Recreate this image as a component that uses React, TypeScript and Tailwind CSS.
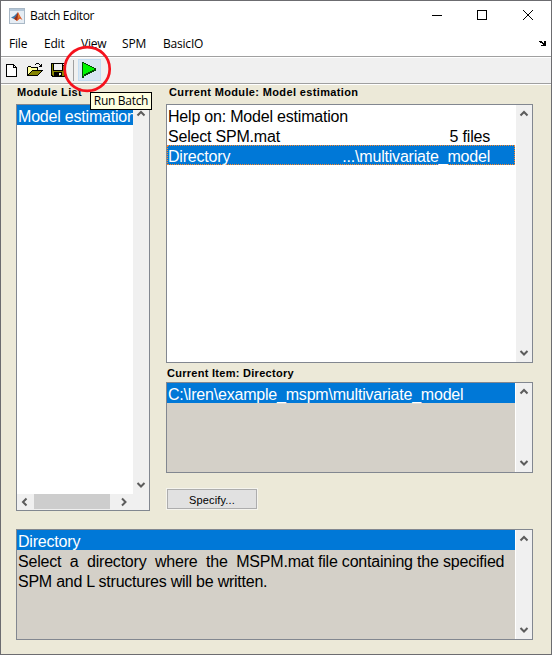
import type { ReactNode } from 'react';

const Chevron = ({ dir }: { dir: 'up' | 'down' | 'left' | 'right' }) => {
  const paths = {
    up: 'M0.5 5.5 L4 2 L7.5 5.5',
    down: 'M0.5 2 L4 5.5 L7.5 2',
    left: 'M5.5 0.5 L2 4 L5.5 7.5',
    right: 'M2 0.5 L5.5 4 L2 7.5',
  };
  return (
    <svg width="8" height="8" viewBox="0 0 8 8" className="block shrink-0 overflow-visible">
      <path d={paths[dir]} fill="none" stroke="#5c5c5c" strokeWidth="2" />
    </svg>
  );
};

const VScroll = () => (
  <div className="flex w-4 shrink-0 flex-col items-center justify-between bg-[#f0f0f0] pt-[5px] pb-[5px]">
    <Chevron dir="up" />
    <Chevron dir="down" />
  </div>
);

const Box = ({ className, children }: { className: string; children: ReactNode }) => (
  <div className={'flex border border-[#828790] text-[16px] leading-[20px] tracking-[-0.2px] ' + className}>{children}</div>
);

const MatlabLogo = () => (
  <svg width="16" height="16" viewBox="0 0 16 16" className="block">
    <rect x="0.5" y="0.5" width="15" height="15" fill="#e6edf4" stroke="#a9b8c6" />
    <rect x="1" y="1" width="14" height="2" fill="#b3c6d8" />
    <path d="M2 9.5 L5 8 L8.5 4.5 L7.5 9 L5 11 Z" fill="#3c78ad" />
    <path d="M5 10.8 L7 8.5 L9 4 L11 8 L13.5 12 L11 10.5 L8 13 Z" fill="#d9531e" />
    <path d="M5 10.8 L7 8.5 L9 4 L8.6 9 L7.6 12.6 Z" fill="#8a3020" />
    <path d="M9.3 5.5 L10.6 9 L9.6 10.5 Z" fill="#f5a13a" />
  </svg>
);

const NewIcon = () => (
  <svg width="11" height="13" viewBox="0 0 11 13" className="block" shapeRendering="crispEdges">
    <path d="M0 0H8V1H9V2H10V3H11V13H0Z" fill="#000" />
    <path d="M1 1H7V4H10V12H1Z" fill="#fff" />
    <path d="M8 2H9V3H8Z" fill="#fff" />
  </svg>
);

const OpenIcon = () => (
  <svg width="16" height="14" viewBox="0 0 16 14" className="block" shapeRendering="crispEdges">
    <path d="M9 0H12V1H9ZM8 1H9V2H8ZM12 1H13V2H12ZM14 1H15V4H12V3H13V2H14Z" fill="#000" />
    <path d="M1 3H4V4H11V7H16V8H15V9H14V10H13V11H12V12H11V13H0V4H1Z" fill="#000" />
    <path d="M1 4H4V5H10V7H5V8H4V9H3V10H2V11H1Z" fill="#ffff9c" />
    <path d="M5 8H14V9H13V10H12V11H11V12H2V11H3V10H4V9H5Z" fill="#848400" />
  </svg>
);

const SaveIcon = () => (
  <svg width="14" height="14" viewBox="0 0 14 14" className="block" shapeRendering="crispEdges">
    <path d="M0 0H14V14H1V13H0Z" fill="#000" />
    <path d="M1 1H2V8H12V3H13V13H2V12H1Z" fill="#848400" />
    <path d="M3 1H11V7H3Z" fill="#efefef" />
    <path d="M12 1H13V2H12ZM9 10H11V13H9Z" fill="#efefef" />
    <path d="M3 9H11V13H9V10H8V13H3Z" fill="#000" />
    <path d="M8 10H10V12H8Z" fill="#efefef" />
  </svg>
);

const RunIcon = () => (
  <svg width="15" height="16" viewBox="0 0 15 16" className="block" shapeRendering="crispEdges">
    <path d="M0 0H2V1H4V2H6V3H8V4H10V5H12V6H14V9H12V10H10V11H8V12H6V13H4V14H2V16H0Z" fill="#064b06" />
    <path d="M1 1H2V2H4V3H6V4H8V5H10V6H12V8H10V9H8V10H6V11H4V12H2V14H1Z" fill="#00f500" />
  </svg>
);

const DockArrow = () => (
  <svg width="7" height="6" viewBox="0 0 7 6" className="block" shapeRendering="crispEdges">
    <path d="M1 0H3V1H4V2H5V0H7V5H2V4H4V3H3V2H1V1H0V0Z" fill="#000" />
  </svg>
);

const ui = "font-['Open_Sans','Noto_Sans',sans-serif] text-[12px]";

export default function App() {
  return (
    <div className="relative flex h-[655px] w-[552px] flex-col overflow-hidden border border-[#6c6c70] bg-[#ece9d8] font-['Liberation_Sans',Arial,sans-serif] text-black">
      <header className={'flex h-[30px] shrink-0 items-center bg-white pl-2 ' + ui}>
        <span className="pb-px"><MatlabLogo /></span>
        <span className="ml-[5px] flex-1 tracking-[-0.35px]">Batch Editor</span>
        <svg width="104" height="14" viewBox="0 0 104 14" className="mr-[15px]" shapeRendering="crispEdges">
          <path d="M0 6.5H10" stroke="#000" />
          <rect x="45.5" y="1.5" width="9" height="9" fill="none" stroke="#000" />
          <path d="M91 1L101 11M101 1L91 11" stroke="#000" shapeRendering="auto" />
        </svg>
      </header>

      <nav className={'flex h-[25px] shrink-0 items-center bg-white pl-2 tracking-[-0.2px] ' + ui}>
        <span className="w-[35px]">File</span>
        <span className="w-[37px]">Edit</span>
        <span className="w-[41px]">View</span>
        <span className="w-[41px]">SPM</span>
        <span className="flex-1">BasicIO</span>
        <span className="mr-[5px]"><DockArrow /></span>
      </nav>

      <div className="flex h-[28px] shrink-0 border-y border-[#a0a0a0] bg-[#f0f0f0]">
        <div className="flex flex-1 items-center border-t border-white pl-[5px]">
          <span className="pb-px"><NewIcon /></span>
          <span className="ml-[10px] pb-px"><OpenIcon /></span>
          <span className="ml-[8px] pb-px"><SaveIcon /></span>
          <span className="ml-[8px] h-[21px] w-px bg-[#a0a0a0]" />
          <span className="ml-[4px] mb-[2px] flex h-[22px] w-[23px] items-center border border-[#c4ddf2] bg-[#d8e6f2] pl-[3px]">
            <RunIcon />
          </span>
        </div>
      </div>

      <main className="flex flex-1 flex-col border-t border-white pl-[15px]">
        <div className="flex h-[425px] gap-[16px]">
          <section className="w-[134px]">
            <h2 className="h-[19px] pl-px pt-[1px] text-[11px] leading-[13px] font-bold tracking-[0.36px]">Module List</h2>
            <Box className="h-[407px] flex-col bg-white">
              <div className="flex flex-1">
                <div className="w-0 flex-1 overflow-hidden">
                  <div className="h-[20px] overflow-hidden bg-[#0078d7] pl-px pt-[2px] whitespace-nowrap text-white">Model estimation</div>
                </div>
                <VScroll />
              </div>
              <div className="flex h-4 items-center bg-[#f0f0f0] pl-[4px]">
                <Chevron dir="left" />
                <span className="ml-[5px] h-[15px] w-[76px] self-start bg-[#cdcdcd]" />
                <span className="ml-[10px]"><Chevron dir="right" /></span>
              </div>
            </Box>
          </section>

          <section className="w-[367px]">
            <h2 className="h-[19px] pl-[3px] pt-[1px] text-[11px] leading-[13px] font-bold tracking-[0.36px]">Current Module: Model estimation</h2>
            <Box className="h-[259px] bg-white">
              <div className="mr-px flex-1">
                <div className="h-[20px] pl-px pt-[2px]">Help on: Model estimation</div>
                <div className="flex h-[20px] justify-between pr-[25px] pl-px pt-[2px]"><span>Select SPM.mat</span><span>5 files</span></div>
                <div className="flex h-[20px] justify-between border border-dotted border-[#ff8728] bg-[#0078d7] pr-[24px] pt-px text-white">
                  <span>Directory</span><span>...\multivariate_model</span>
                </div>
              </div>
              <VScroll />
            </Box>
            <h2 className="h-[19px] pl-px pt-[4px] text-[11px] leading-[13px] font-bold tracking-[0.28px]">Current Item: Directory</h2>
            <Box className="h-[91px] bg-[#d4d0c8]">
              <div className="flex-1 border-r border-white">
                <div className="h-[20px] bg-[#0078d7] pl-px pt-[2px] text-white">C:\lren\example_mspm\multivariate_model</div>
              </div>
              <VScroll />
            </Box>
            <button className="mt-[15px] flex h-[22px] w-[92px] items-center justify-center border border-[#f5f4ee] bg-[#e1e1e1] p-0">
              <span className="flex h-full w-full items-center justify-center border border-[#adadad] pt-[2px] text-[11px] tracking-[0.15px]">Specify...</span>
            </button>
          </section>
        </div>

        <Box className="mt-[19px] h-[111px] w-[517px] bg-[#d4d0c8]">
          <div className="w-0 flex-1 border-r border-white">
            <div className="h-[20px] bg-[#0078d7] pl-px pt-[2px] text-white">Directory</div>
            <div className="h-[20px] pl-px pt-[2px] whitespace-pre">Select  a  directory  where  the  MSPM.mat file containing the specified</div>
            <div className="h-[20px] pl-px pt-[2px] tracking-[-0.24px]">SPM and L structures will be written.</div>
          </div>
          <VScroll />
        </Box>
      </main>

      <svg width="50" height="50" viewBox="0 0 50 50" className="absolute left-[61px] top-[43px]">
        <ellipse cx="25.2" cy="25" rx="22.5" ry="21.8" fill="none" stroke="#f5121d" strokeWidth="2.7" />
      </svg>
      <div className={'absolute left-[89px] top-[91px] flex h-[18px] w-[62px] items-center justify-center border border-black bg-[#ffffe1] whitespace-nowrap tracking-[-0.3px] ' + ui}>
        Run Batch
      </div>
    </div>
  );
}
